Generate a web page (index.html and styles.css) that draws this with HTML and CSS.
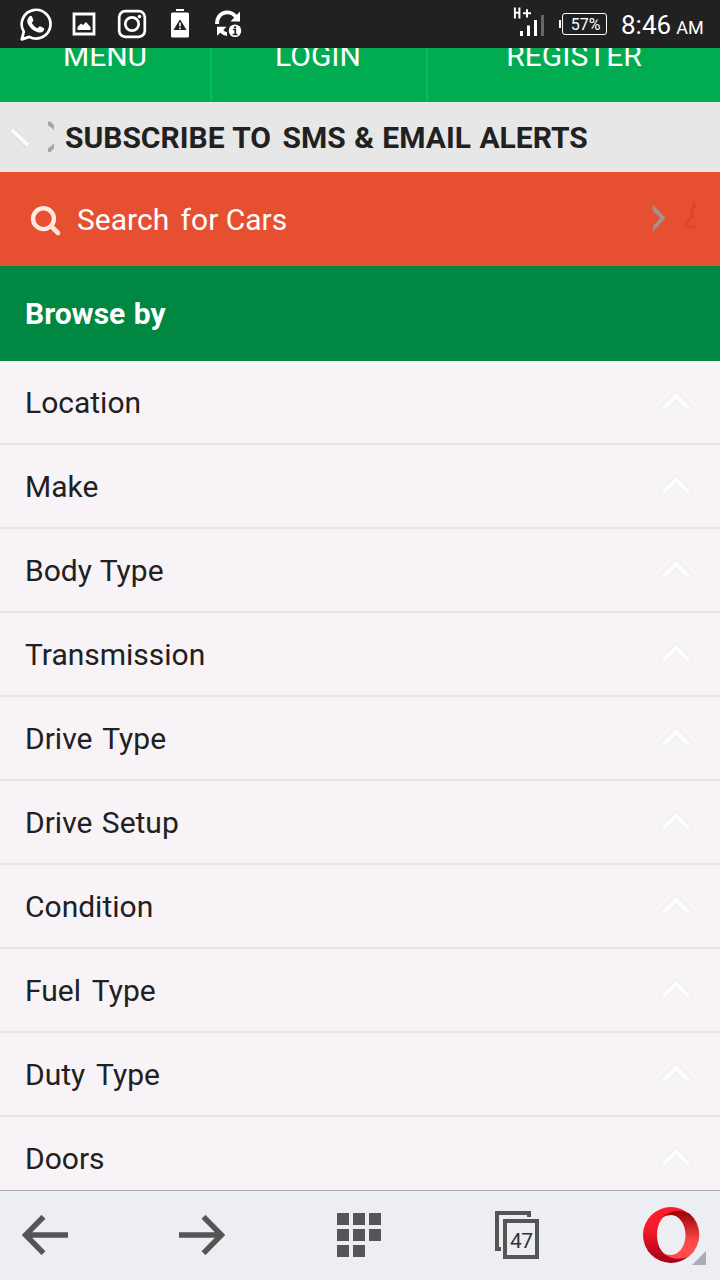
FILE: index.html
```html
<!DOCTYPE html>
<html lang="en">
<head>
<meta charset="utf-8">
<title>Search for Cars</title>
<link rel="stylesheet" href="styles.css">
</head>
<body>
<div class="screen">
  <header class="status">
    <div class="notices">
      <svg class="i-chat" width="34" height="36" viewBox="19 6 34 36"><path d="M21.800 39.400 23.800 31.700A14.400 14.400 0 1 1 29.300 36.900Z" fill="none" stroke="#fff" stroke-width="2.7" stroke-linejoin="round"/><path d="M29.400 16.400c.9-.8 2-.8 2.500.2l1.400 3.200c.3.8-.1 1.400-1.500 2.900 1.200 2.600 3.200 4.500 6 5.600 1.500-1.900 2-2.300 2.800-1.900l3 1.500c.9.5.8 1.200.3 2.400-.9 1.900-3.400 2.700-5.500 2.100-5.200-1.500-8.500-4.500-10.700-9-.9-2.300-.3-5.200 1.700-7Z" fill="#fff"/></svg>
      <svg class="i-image" width="24" height="24" viewBox="72 12 24 24"><path d="M74 14h20v20H74Z" fill="none" stroke="#fff" stroke-width="2.800"/><path d="M77.500 30v-3l3.500-3.500 2 1.500 3-3 4.500 5v3Z" fill="#fff"/></svg>
      <svg class="i-camera" width="30" height="30" viewBox="117 9 30 30"><rect x="119.2" y="11.2" width="25.6" height="25.6" rx="6" fill="none" stroke="#fff" stroke-width="2.7"/><circle cx="132" cy="24" r="6.7" fill="none" stroke="#fff" stroke-width="2.7"/><circle cx="139.5" cy="16.6" r="1.8" fill="#fff"/></svg>
      <svg class="i-power" width="20" height="30" viewBox="170 8 20 30"><path d="M176 9h8v2h-8ZM172.500 12.500h15q1.500 0 1.500 1.500v22q0 1.500-1.500 1.500h-15q-1.500 0-1.500-1.500v-22q0-1.500 1.500-1.500Z" fill="#fff"/><path d="M180 19.200l6.500 10.800h-13Z" fill="#222"/><path d="M180 22.500v4M180 27.500v1.700" stroke="#fff" stroke-width="1.6"/></svg>
      <svg class="i-sync" width="28" height="30" viewBox="214 8 28 30"><path d="M217 24c0-7 4-11.700 10-11.700 4 0 7 1.700 9.500 5" fill="none" stroke="#fff" stroke-width="3.800"/><path d="M240 11.500v10h-9.500ZM217 26.800h9.500l-3.200 3.200q1.500 2 3.700 2.300v3.700q-4-.4-6.700-3.200l-3.300 3Z" fill="#fff"/><circle cx="235" cy="30.800" r="6.300" fill="#fff"/><path d="M233 29.500h2.300v5M232.700 34.500h4.800" stroke="#222" stroke-width="1.700" fill="none"/><path d="M234 26.300h2.200v1.800H234Z" fill="#222"/></svg>
    </div>
    <div class="state">
      <svg class="i-signal" width="32" height="32" viewBox="513 6 32 32"><path d="M514.900 7.500v11M519.400 7.500v11M515 12.700h5M523 13.300h8M527 9.200v8.200" stroke="#fff" stroke-width="2"/><path d="M521.500 31v5M528.500 25.500v10.500M535.500 20v16" stroke="#fff" stroke-width="3"/><path d="M542.500 15v21" stroke="#666" stroke-width="3"/></svg>
      <div class="battery"><span class="battery-text">57%</span></div>
      <div class="clock"><span class="time">8:46</span><span class="ampm">AM</span></div>
    </div>
  </header>
  <nav class="tabs">
    <a class="tab tab-menu">MENU</a>
    <a class="tab tab-login">LOGIN</a>
    <a class="tab tab-register">REGISTER</a>
  </nav>
  <div class="subscribe">
    <svg class="i-sprite" width="48" height="36" viewBox="10 20 48 36"><path d="M13 32 28 47" stroke="#dbe0d9" stroke-width="6.500"/><path d="M12 31 28 46" stroke="#fafcf9" stroke-width="4"/><path d="M48 22.500h2.500l3.500 3.500v5.500q-2-3-6-5ZM48 53h2.500l3.500-3.500v-5.500q-2 3-6 5Z" fill="#a4a9a5"/></svg>
    <span class="subscribe-text">SUBSCRIBE TO<span class="gap-wide"> </span>SMS &amp; EMAIL ALERTS</span>
  </div>
  <div class="search">
    <svg class="i-search" width="34" height="34" viewBox="28 202 34 34"><circle cx="43.500" cy="217.700" r="10.400" fill="none" stroke="#ffe9e2" stroke-width="4.400"/><path d="M51.500 225.500 58 232" stroke="#ffdfd6" stroke-width="4.600" stroke-linecap="round"/></svg>
    <span class="search-text">Search<span class="gap-wide"> </span>for Cars</span>
    <svg class="i-next" width="46" height="32" viewBox="652 202 46 32"><path d="M653 205 665.500 218 653 231.500V226L660.500 218 653 211Z" fill="#a29590" stroke="#b47a6c" stroke-width=".8"/><path d="M694 202v5l-2.500 4 .5 6q-7 6-6 8.500 1 1.500 9 1.500" fill="none" stroke="#da4629" stroke-width="2.800"/></svg>
  </div>
  <h2 class="browse">Browse by</h2>
  <ul class="list">
    <li class="row"><span>Location</span><svg class="i-up" width="32" height="24" viewBox="0 0 32 24"><use href="#up"/></svg></li>
    <li class="row"><span>Make</span><svg class="i-up" width="32" height="24" viewBox="0 0 32 24"><use href="#up"/></svg></li>
    <li class="row"><span class="snug">Body Type</span><svg class="i-up" width="32" height="24" viewBox="0 0 32 24"><use href="#up"/></svg></li>
    <li class="row"><span>Transmission</span><svg class="i-up" width="32" height="24" viewBox="0 0 32 24"><use href="#up"/></svg></li>
    <li class="row"><span class="loose">Drive Type</span><svg class="i-up" width="32" height="24" viewBox="0 0 32 24"><use href="#up"/></svg></li>
    <li class="row"><span>Drive Setup</span><svg class="i-up" width="32" height="24" viewBox="0 0 32 24"><use href="#up"/></svg></li>
    <li class="row"><span>Condition</span><svg class="i-up" width="32" height="24" viewBox="0 0 32 24"><use href="#up"/></svg></li>
    <li class="row"><span class="spaced">Fuel Type</span><svg class="i-up" width="32" height="24" viewBox="0 0 32 24"><use href="#up"/></svg></li>
    <li class="row"><span class="spaced">Duty Type</span><svg class="i-up" width="32" height="24" viewBox="0 0 32 24"><use href="#up"/></svg></li>
    <li class="row"><span>Doors</span><svg class="i-up" width="32" height="24" viewBox="0 0 32 24"><use href="#up"/></svg></li>
  </ul>
  <footer class="toolbar">
    <svg class="i-back" width="46" height="40" viewBox="0 0 46 40"><path d="M46 20H5M21.500 1.800 3.500 20 21.500 38.200" fill="none" stroke="#555" stroke-width="5.500"/></svg>
    <svg class="i-forward" width="46" height="40" viewBox="0 0 46 40"><path d="M0 20H41M24.500 1.800 42.500 20 24.500 38.200" fill="none" stroke="#555" stroke-width="5.500"/></svg>
    <svg class="i-grid" width="44" height="44" viewBox="0 0 44 44"><path d="M0 0h12v12H0ZM16 0h12v12H16ZM32 0h12v12H32ZM0 16h12v12H0ZM16 16h12v12H16ZM32 16h12v12H32ZM0 32h12v12H0ZM16 32h12v12H16Z" fill="#555"/></svg>
    <div class="pages">
      <svg width="44" height="48" viewBox="0 0 44 48"><path d="M6 38H2V2H34V6M10 10H42V46H10Z" fill="none" stroke="#555" stroke-width="4"/></svg>
      <span class="count">47</span>
    </div>
    <svg class="i-opera" width="64" height="60" viewBox="642 1206 64 60">
      <defs>
        <linearGradient id="outer" x1="0" y1="0" x2="0" y2="1"><stop offset="0" stop-color="#ff1b2d"/><stop offset=".4" stop-color="#f51a2b"/><stop offset="1" stop-color="#a10013"/></linearGradient>
        <linearGradient id="inner" x1="0" y1="0" x2="0" y2="1"><stop offset="0" stop-color="#980000"/><stop offset=".65" stop-color="#ff4b4b"/><stop offset="1" stop-color="#ff4b4b"/></linearGradient>
      </defs>
      <path d="M671 1207a28 28 0 0 0 0 56q10 0 18-7H671c-8 0-14-9-14-21s6-21 14-21h18q-8-7-18-7Z" fill="url(#outer)"/>
      <path d="M662 1217.500q13-11 27.500-4A28 28 0 0 1 689.500 1256q-14 7-27.500-3.500 4 2.500 9 2.500c8 0 14.500-9 14.500-20S679 1215 671 1215q-5 0-9 2.500Z" fill="url(#inner)"/>
      <path d="M706 1251v14h-14Z" fill="#a9acb5"/>
    </svg>
  </footer>
</div>
<svg class="symbols" width="0" height="0"><defs><g id="up"><path d="M1.500 20 16 7 30.500 20" fill="none" stroke="#f0f3f1" stroke-width="7.500"/><path d="M3 19.500 16.300 7 29 19.500" fill="none" stroke="#fdfefd" stroke-width="4"/></g></defs></svg>
</body>
</html>
```
FILE: styles.css
```css
* { box-sizing: border-box; }
body {
  margin: 0;
  font-family: Roboto, "Liberation Sans", sans-serif;
  color: #212121;
}
svg { display: block; flex: none; }
.symbols { position: absolute; }
.screen {
  width: 720px;
  height: 1280px;
  overflow: hidden;
  display: flex;
  flex-direction: column;
  background: #f7f3f7;
}
.status {
  flex: none;
  height: 48px;
  background: #212121;
  color: #fff;
  display: flex;
  justify-content: space-between;
}
.notices { display: flex; align-items: flex-start; padding-left: 19px; }
.i-chat { margin-top: 6px; }
.i-image { margin: 12px 0 0 19px; }
.i-camera { margin: 9px 0 0 21px; }
.i-power { margin: 8px 0 0 23px; }
.i-sync { margin: 8px 0 0 24px; }
.state { display: flex; align-items: flex-start; width: 207px; }
.i-signal { margin-top: 6px; }
.battery { display: flex; align-items: center; margin: 13px 0 0 14px; }
.battery::before { content: ""; width: 2px; height: 8px; margin-right: 1px; background: #fff; }
.battery-text {
  width: 45px;
  height: 22px;
  border: 1px solid #fff;
  border-radius: 3px;
  font-size: 16px;
  line-height: 21px;
  text-align: center;
  padding-left: 2px;
}
.clock { display: flex; align-items: baseline; margin: 9px 0 0 14px; line-height: 32px; white-space: nowrap; }
.time { font-size: 26px; }
.ampm { font-size: 18px; margin-left: 5px; }
.tabs {
  flex: none;
  height: 54px;
  overflow: hidden;
  background: #00ab52;
  color: #fff;
  display: flex;
  font-size: 30px;
}
.tab { margin-top: -9px; height: 63px; line-height: 34px; text-align: center; }
.tab-menu { width: 212px; border-right: 2px solid #00bf60; }
.tab-login { width: 216px; border-right: 2px solid #00bf60; padding-right: 2px; }
.tab-register { width: 292px; }
.subscribe {
  flex: none;
  height: 70px;
  background: #e7e7e7;
  display: flex;
  align-items: center;
  padding-left: 10px;
}
.subscribe-text { margin-left: 7px; padding-top: 1px; font-size: 30px; font-weight: 700; line-height: 34px; word-spacing: 1px; white-space: nowrap; }
.gap-wide { word-spacing: 4px; }
.search {
  flex: none;
  height: 94px;
  background: #e74f31;
  color: #fff;
  display: flex;
  align-items: center;
  padding: 2px 22px 0 28px;
}
.search-text { margin-left: 15px; padding-bottom: 2px; flex: 1; font-size: 30px; word-spacing: 0; }
.i-next { margin-top: -4px; }
.browse {
  flex: none;
  height: 95px;
  margin: 0;
  padding: 0 25px;
  background: #008742;
  color: #fff;
  font-size: 30px;
  font-weight: 700;
  line-height: 96px;
  word-spacing: 1px;
}
.list { flex: 1; min-height: 0; overflow: hidden; margin: 0; padding: 0; list-style: none; }
.row {
  height: 84px;
  border-bottom: 2px solid #e7e5e8;
  display: flex;
  align-items: center;
  justify-content: space-between;
  padding: 2px 28px 0 25px;
  font-size: 30px;
  word-spacing: 2px;
}
.row span { padding-bottom: 2px; }
.snug { word-spacing: 1px; }
.loose { word-spacing: 3px; }
.spaced { word-spacing: 4px; }
.i-up { margin-top: -4px; }
.toolbar {
  flex: none;
  height: 90px;
  border-top: 1px solid #adaaad;
  background: #eceef4;
  display: flex;
  align-items: center;
  padding: 0 0 2px 22px;
}
.i-forward { margin-left: 111px; }
.i-grid { margin-left: 112px; }
.pages { position: relative; margin-left: 114px; }
.count { position: absolute; left: 15px; top: 18px; font-size: 21px; line-height: 24px; letter-spacing: -.5px; color: #333; }
.i-opera { margin: 3px 0 0 103px; }
```
